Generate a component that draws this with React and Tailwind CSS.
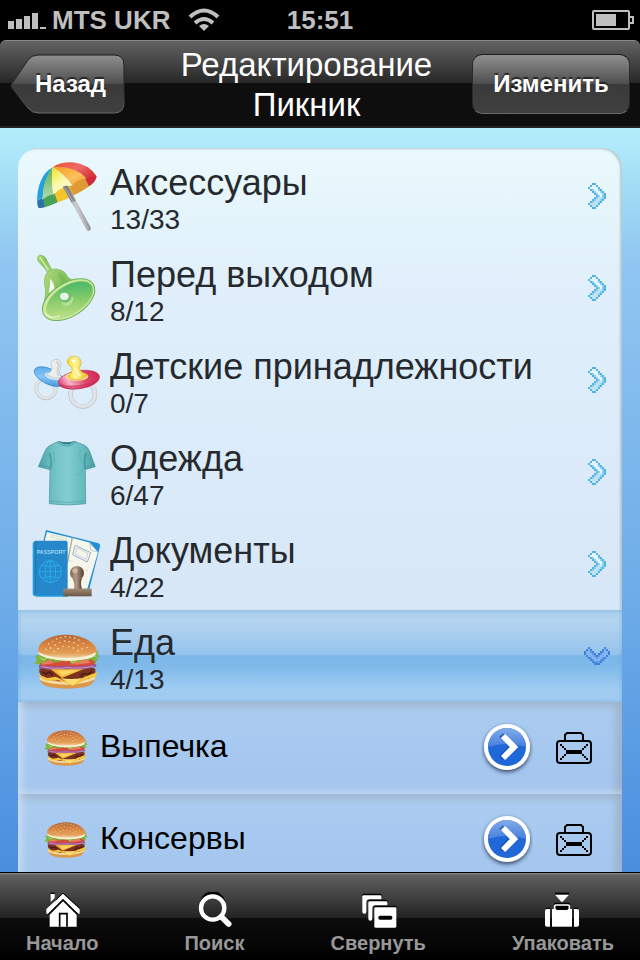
import React from "react";

const CHEVRON = [
  "..bb.....",
  ".bwwb....",
  "bwwwwb...",
  ".bmwwmb..",
  "..bmwwmb.",
  "...bmwwmb",
  "....bmwmb",
  "...bmllmb",
  "..bmllmb.",
  ".bmllmb..",
  "bllllb...",
  ".bllb....",
  "..bb.....",
];

function PixelChevron({ open }) {
  const colors = open
    ? { b: "#3b82d8", m: "#5b98e4", w: "#82b4f0", l: "#82b4f0" }
    : { b: "#52b2e2", m: "#8fcfee", w: "#e4f6fd", l: "#bfe3f5" };
  const cells = [];
  CHEVRON.forEach((line, y) =>
    [...line].forEach((c, x) => {
      if (c !== ".") {
        cells.push(
          <rect
            key={x + "-" + y}
            x={open ? y : x}
            y={open ? x : y}
            width="1"
            height="1"
            fill={colors[c]}
          />
        );
      }
    })
  );
  return open ? (
    <svg aria-hidden="true" viewBox="0 0 13 9" className="h-[18px] w-[26px] shrink-0" shapeRendering="crispEdges">{cells}</svg>
  ) : (
    <svg aria-hidden="true" viewBox="0 0 9 13" className="mr-1 h-[26px] w-[18px] shrink-0" shapeRendering="crispEdges">{cells}</svg>
  );
}

function Umbrella() {
  return (
    <svg aria-hidden="true" viewBox="42 30 198 216" className="h-[72px] w-[66px] shrink-0">
      <defs>
        <linearGradient id="umPole" x1="0" y1="0.6" x2="1" y2="0.4">
          <stop offset="0" stopColor="#7d7d82" />
          <stop offset="0.5" stopColor="#c9c9cd" />
          <stop offset="1" stopColor="#85858a" />
        </linearGradient>
        <linearGradient id="umRed" x1="0" y1="0" x2="1" y2="0.5">
          <stop offset="0" stopColor="#e8562a" />
          <stop offset="0.6" stopColor="#f0686a" />
          <stop offset="1" stopColor="#d83a3a" />
        </linearGradient>
        <linearGradient id="umYel" x1="0" y1="0" x2="0.6" y2="1">
          <stop offset="0" stopColor="#f0e21c" />
          <stop offset="0.55" stopColor="#fbf8a8" />
          <stop offset="1" stopColor="#faf6e0" />
        </linearGradient>
        <linearGradient id="umOr" x1="0" y1="0" x2="1" y2="1">
          <stop offset="0" stopColor="#f6a01c" />
          <stop offset="0.6" stopColor="#fbc060" />
          <stop offset="1" stopColor="#f08c28" />
        </linearGradient>
        <linearGradient id="umGr" x1="0.5" y1="0" x2="0.5" y2="1">
          <stop offset="0" stopColor="#5fb04c" />
          <stop offset="1" stopColor="#b5dcb4" />
        </linearGradient>
      </defs>
      <path d="M53 155Q95 110 130 104Q190 76 230 78Q226 98 196 116Q150 142 102 160Q78 172 57 174Q51 168 53 155Z" fill="#f0b52c" />
      <path d="M52 152Q62 144 78 146L74 172Q64 175 57 174Q51 168 52 152Z" fill="#2a6fb0" />
      <path d="M70 146Q90 130 103 127L113 157Q90 168 74 172Z" fill="#4aa354" />
      <path d="M103 127Q130 108 142 106L152 142Q130 152 113 157Z" fill="#f3c52e" />
      <path d="M150 108Q170 88 196 86L208 108Q180 128 160 136Z" fill="#e09a35" />
      <path d="M196 86Q216 72 230 79Q228 96 207 109Z" fill="#d0283c" />
      <path d="M98 52Q52 78 51 156Q62 140 68 150Q70 90 98 52Z" fill="#23a0e0" />
      <path d="M98 52Q68 90 67 150Q82 136 100 133Q94 86 98 52Z" fill="url(#umGr)" />
      <path d="M98 52Q92 96 100 134Q120 112 158 106Q130 74 98 52Z" fill="url(#umYel)" />
      <path d="M98 52Q134 74 158 106Q178 84 203 84Q168 44 98 52Z" fill="url(#umOr)" />
      <path d="M98 52Q118 36 158 37Q206 42 230 79Q214 76 200 86Q164 46 98 52Z" fill="url(#umRed)" />
      <path d="M129 110Q136 106 144 108L212 232Q214 241 206 243Q201 243 199 238Z" fill="url(#umPole)" />
      <path d="M129 110Q136 106 144 108L168 152L154 158Z" fill="#66666c" opacity="0.55" />
      <path d="M134 112L204 238" stroke="#dcdce0" strokeWidth="2" opacity="0.7" />
    </svg>
  );
}

function Bell() {
  return (
    <svg aria-hidden="true" viewBox="42 306 198 216" className="h-[72px] w-[66px] shrink-0">
      <defs>
        <linearGradient id="beBody" x1="0" y1="0" x2="1" y2="0.4">
          <stop offset="0" stopColor="#b5dc80" />
          <stop offset="0.5" stopColor="#84c25c" />
          <stop offset="1" stopColor="#9dd06c" />
        </linearGradient>
        <linearGradient id="beIn" x1="0" y1="1" x2="1" y2="0">
          <stop offset="0" stopColor="#cfe892" />
          <stop offset="0.5" stopColor="#86cb6a" />
          <stop offset="1" stopColor="#2fae68" />
        </linearGradient>
      </defs>
      <path d="M52 324Q54 314 65 316Q78 320 82 334L97 362L86 372Q74 352 61 341Q52 334 52 324Z" fill="url(#beBody)" stroke="#7ab95f" strokeWidth="2" />
      <path d="M60 322Q68 334 86 362" stroke="#d0eca0" strokeWidth="5" fill="none" />
      <path d="M76 378Q82 357 108 357Q134 360 141 378Q150 392 176 392L200 420L90 490L66 480Q82 430 74 404Q72 388 76 378Z" fill="url(#beBody)" stroke="#7ab95f" strokeWidth="2" />
      <path d="M90 386Q104 398 104 424L86 428Q92 404 90 386Z" fill="#fff" opacity="0.9" />
      <path d="M112 366Q128 368 132 384Q146 400 160 394L134 408Q118 396 112 366Z" fill="#64b052" opacity="0.4" />
      <ellipse cx="146" cy="449" rx="87" ry="50" transform="rotate(-32 146 449)" fill="#cdea9a" stroke="#69b058" strokeWidth="3" />
      <ellipse cx="149" cy="448" rx="78" ry="42" transform="rotate(-32 149 448)" fill="url(#beIn)" stroke="#a5d27a" strokeWidth="2" />
      <path d="M124 456Q150 440 160 440Q160 462 144 468Q128 470 124 456Z" fill="#b4e094" />
      <ellipse cx="136" cy="442" rx="18" ry="16" fill="#74be70" />
      <ellipse cx="133" cy="439" rx="13" ry="11" fill="#fff" opacity="0.85" />
      <path d="M74 488Q84 508 120 498" stroke="#f1fad8" strokeWidth="4" fill="none" opacity="0.7" />
    </svg>
  );
}

function Pacifiers() {
  return (
    <svg aria-hidden="true" viewBox="42 27 198 216" className="h-[72px] w-[66px] shrink-0 overflow-visible">
      <defs>
        <linearGradient id="paBlue" x1="0" y1="0" x2="1" y2="1">
          <stop offset="0" stopColor="#4aa3ea" />
          <stop offset="0.5" stopColor="#86c6f5" />
          <stop offset="1" stopColor="#2d86d6" />
        </linearGradient>
        <linearGradient id="paPink" x1="0" y1="0.6" x2="1" y2="0.4">
          <stop offset="0" stopColor="#e0386a" />
          <stop offset="0.25" stopColor="#f7b4c8" />
          <stop offset="0.6" stopColor="#e2486f" />
          <stop offset="1" stopColor="#cf2a56" />
        </linearGradient>
        <linearGradient id="paYel" x1="0" y1="0" x2="1" y2="0">
          <stop offset="0" stopColor="#f3da22" />
          <stop offset="0.4" stopColor="#fdf59a" />
          <stop offset="1" stopColor="#e8bf10" />
        </linearGradient>
      </defs>
      <ellipse cx="78" cy="160" rx="29" ry="30" fill="none" stroke="#b9bfc4" strokeWidth="11" />
      <ellipse cx="78" cy="159" rx="29" ry="30" fill="none" stroke="#dfe3e6" strokeWidth="9" />
      <ellipse cx="88" cy="125" rx="49" ry="23" transform="rotate(26 88 125)" fill="url(#paBlue)" stroke="#2e7fc6" strokeWidth="2" />
      <ellipse cx="100" cy="124" rx="26" ry="10" transform="rotate(14 100 124)" fill="#d4e6f2" />
      <path d="M80 118Q96 110 96 98Q86 78 106 73Q128 74 122 94Q114 108 124 128Q100 134 80 118Z" fill="#eceeee" stroke="#b4bcc2" strokeWidth="2" />
      <path d="M108 80Q120 84 114 100Q110 112 116 124" stroke="#cdd1d4" strokeWidth="6" fill="none" />
      <ellipse cx="188" cy="178" rx="37" ry="37" fill="none" stroke="#b9bfc4" strokeWidth="13" />
      <ellipse cx="188" cy="177" rx="37" ry="37" fill="none" stroke="#e1e4e6" strokeWidth="10" />
      <ellipse cx="177" cy="134" rx="62" ry="27" transform="rotate(-9 177 134)" fill="url(#paPink)" stroke="#c22b55" strokeWidth="2" />
      <path d="M116 146Q150 158 206 144Q232 136 238 122Q238 144 206 156Q150 172 118 152Z" fill="#c92652" opacity="0.6" />
      <ellipse cx="171" cy="124" rx="34" ry="13" fill="#f9e7a0" />
      <path d="M142 124Q158 116 156 98Q134 84 146 70Q160 58 176 68Q190 80 178 98Q182 114 202 120Q192 134 170 134Q150 134 142 124Z" fill="url(#paYel)" stroke="#dcae18" strokeWidth="2" />
      <path d="M152 76Q160 70 166 76L160 84Z" fill="#fff" opacity="0.9" />
      <path d="M166 100Q172 116 182 122" stroke="#fff9c8" strokeWidth="5" fill="none" />
    </svg>
  );
}

function Shirt() {
  return (
    <svg aria-hidden="true" viewBox="42 303 198 216" className="h-[72px] w-[66px] shrink-0">
      <defs>
        <linearGradient id="shBody" x1="0" y1="0" x2="1" y2="0">
          <stop offset="0" stopColor="#4aa3a6" />
          <stop offset="0.25" stopColor="#6fc0c4" />
          <stop offset="0.5" stopColor="#82cdd2" />
          <stop offset="0.8" stopColor="#66babe" />
          <stop offset="1" stopColor="#459c9f" />
        </linearGradient>
      </defs>
      <path d="M116 319Q140 330 164 319L194 331Q204 336 210 352L226 395L196 404L197 506Q142 514 88 506L90 404L55 395L74 350Q80 336 90 331Z" fill="url(#shBody)" stroke="#43979b" strokeWidth="2" strokeLinejoin="round" />
      <path d="M116 319Q140 338 164 319Q140 325 116 319Z" fill="#2f7f84" />
      <path d="M113 321Q140 346 167 321" fill="none" stroke="#4c9da2" strokeWidth="3" />
      <path d="M91 402Q98 380 88 354M196 402Q190 380 198 354" fill="none" stroke="#2f8488" strokeWidth="5" opacity="0.6" />
      <path d="M91 400Q110 380 100 350M195 390Q172 374 182 346M168 420Q184 414 194 396" fill="none" stroke="#4fa9ad" strokeWidth="4" opacity="0.4" />
      <path d="M89 498Q142 507 197 498" fill="none" stroke="#4ba5a9" strokeWidth="2" />
      <path d="M58 389L90 397M224 389L197 397" stroke="#418f93" strokeWidth="2" />
    </svg>
  );
}

function Passport() {
  return (
    <svg aria-hidden="true" viewBox="42 24 198 216" className="h-[72px] w-[66px] shrink-0 overflow-visible">
      <defs>
        <linearGradient id="psKnob" x1="0" y1="0" x2="1" y2="0">
          <stop offset="0" stopColor="#7a6251" />
          <stop offset="0.4" stopColor="#b59c88" />
          <stop offset="1" stopColor="#4f3b30" />
        </linearGradient>
        <linearGradient id="psBase" x1="0" y1="0" x2="0" y2="1">
          <stop offset="0" stopColor="#a08a76" />
          <stop offset="1" stopColor="#6b5546" />
        </linearGradient>
      </defs>
      <path d="M78 30L158 50L236 70L241 76L208 208L130 200L66 80Z" fill="#2390d6" />
      <path d="M81 36L156 54L150 100L72 70Z" fill="#f4f5e8" />
      <path d="M158 54L210 68L214 88L234 96L202 206L132 206L140 100Z" fill="#f6f6ea" />
      <path d="M157 52L142 130" stroke="#a9ad9e" strokeWidth="4" />
      <path d="M210 70L234 96L212 90Z" fill="#fff" stroke="#9db5c2" strokeWidth="2" />
      <path d="M166 76L212 98L202 126L158 104Z" fill="none" stroke="#9aaed0" strokeWidth="3" />
      <path d="M172 84L204 100L198 118L166 102Z" fill="none" stroke="#b2c0da" strokeWidth="2" />
      <path d="M92 44L142 56M90 50L140 62M146 120L158 124M196 150L204 152" stroke="#b8c6b8" strokeWidth="2" strokeDasharray="6 3" />
      <path d="M48 62H136Q143 62 143 68V228H48Q40 228 40 220V70Q40 62 48 62Z" fill="#2687cb" />
      <path d="M40 68V222Q42 228 50 228H143" fill="none" stroke="#1d9fe0" strokeWidth="4" />
      <path d="M47 66V220" stroke="#1f76b6" strokeWidth="3" />
      <text x="50" y="101" fontSize="16" fontWeight="700" fill="#9ad8f5" className="font-['Liberation_Sans',Arial,sans-serif]">PASSPORT</text>
      <g fill="none" stroke="#27aeea" strokeWidth="3">
        <circle cx="91" cy="155" r="33" />
        <ellipse cx="91" cy="155" rx="16" ry="33" />
        <path d="M91 122V188M58 155H124M64 136Q91 144 118 136M64 174Q91 166 118 174" />
      </g>
      <path d="M158 176Q166 190 162 208H186Q180 190 186 174Z" fill="url(#psKnob)" />
      <circle cx="171" cy="159" r="21" fill="url(#psKnob)" />
      <ellipse cx="165" cy="152" rx="8" ry="7" fill="#d6c6b8" opacity="0.75" />
      <rect x="130" y="206" width="85" height="23" fill="url(#psBase)" />
    </svg>
  );
}

function Burger({ small }) {
  const id = React.useId();
  const seeds = [
    [86, 372], [98, 364], [110, 357], [122, 353], [136, 350], [150, 352], [164, 354], [176, 360], [190, 370], [202, 382],
    [92, 384], [106, 375], [120, 367], [134, 363], [148, 365], [162, 368], [174, 376], [186, 385], [78, 388], [114, 386],
    [130, 379], [146, 380], [160, 384], [102, 394], [174, 392],
  ];
  return (
    <svg
      aria-hidden="true"
      viewBox={small ? "42 338 198 174" : "42 300 198 216"}
      className={small ? "h-[38px] w-[44px] shrink-0" : "h-[72px] w-[66px] shrink-0"}
    >
      <defs>
        <linearGradient id={id} x1="0" y1="0" x2="0" y2="1">
          <stop offset="0" stopColor="#b5683a" />
          <stop offset="0.4" stopColor="#d98440" />
          <stop offset="0.72" stopColor="#e3a058" />
          <stop offset="1" stopColor="#f7ecca" />
        </linearGradient>
      </defs>
      <path d="M58 470Q60 496 92 502Q140 510 192 502Q226 494 226 468Z" fill="#dd9748" />
      <path d="M58 470Q90 486 142 486Q200 486 226 466L225 478Q190 494 142 494Q88 494 60 480Z" fill="#f4dcaa" />
      <path d="M58 446Q90 436 142 444Q200 436 226 446Q230 470 206 476Q142 490 80 476Q54 466 58 446Z" fill="#7c3220" />
      <path d="M66 456L78 462L88 456L98 466M180 470L192 460L204 464L216 454" stroke="#4f1c12" strokeWidth="5" fill="none" />
      <path d="M54 414Q100 404 142 412Q196 404 232 416L222 440L60 438Z" fill="#7eae36" />
      <path d="M56 420L86 414L106 428L140 420L176 428L206 416L226 424L218 438Q140 452 62 436Z" fill="#d84a38" />
      <path d="M62 424L94 420L102 430L66 434ZM156 424L200 418L212 428L164 434Z" fill="#ee7a62" />
      <path d="M58 434Q100 442 140 437Q190 442 226 431L230 439Q190 454 140 450Q96 454 56 443Z" fill="#a0508e" />
      <path d="M64 440Q106 448 140 443Q190 447 220 438" stroke="#e3c3dc" strokeWidth="2" fill="none" />
      <path d="M92 448L190 448L126 474Z" fill="#f3b72e" />
      <path d="M112 452L176 450L126 468Z" fill="#f9d766" />
      <path d="M50 462L82 474L108 470L156 494L194 470L234 456L226 472L204 476L158 497L116 480L78 482Z" fill="#f5c63c" />
      <path d="M120 474L158 496L188 474Q152 480 120 474Z" fill="#fbdc70" />
      <path d="M50 404Q44 414 52 420L42 430L58 434L64 426L74 430L82 418L94 424L104 414L116 424L128 418L138 426L146 416L156 436L166 420L178 428L190 414L204 422L214 416L226 426L234 418L226 414L240 410L232 402L236 392Q142 430 50 404Z" fill="#7db43c" />
      <path d="M58 412L70 420L84 412M106 418L122 414M148 420L158 428L172 416M196 414L216 408L230 408" stroke="#bfe07c" strokeWidth="3" fill="none" />
      <path d="M54 394Q52 372 82 356Q110 343 140 344Q176 344 200 358Q232 376 230 398Q220 416 184 418Q142 426 96 416Q58 410 54 394Z" fill={"url(#" + id + ")"} />
      <path d="M54 396Q90 414 142 414Q198 414 230 396Q226 412 200 417Q142 428 84 415Q56 408 54 396Z" fill="#f8f0d4" />
      <g fill="#f9e6bd" opacity="0.85">
        {seeds.map(([x, y]) => (
          <ellipse key={x + "-" + y} cx={x} cy={y} rx="3" ry="2" />
        ))}
      </g>
    </svg>
  );
}

function GoIcon() {
  return (
    <svg aria-hidden="true" viewBox="0 0 52 56" className="h-14 w-[52px]">
      <defs>
        <linearGradient id="goTop" x1="0" y1="0" x2="0" y2="1">
          <stop offset="0" stopColor="#82abe9" />
          <stop offset="1" stopColor="#4580de" />
        </linearGradient>
        <filter id="goShadow" x="-20%" y="-20%" width="140%" height="150%">
          <feDropShadow dx="0" dy="2" stdDeviation="2" floodColor="#1c2c48" floodOpacity="0.85" />
        </filter>
      </defs>
      <circle cx="26" cy="27" r="23" fill="#fff" filter="url(#goShadow)" />
      <circle cx="26" cy="27" r="19" fill="#2068d8" />
      <path d="M7 27A19 19 0 0 1 45 27Q26 21 7 27Z" fill="url(#goTop)" />
      <path d="M20 15L31 26L20 38" fill="none" stroke="#0d3fae" strokeWidth="5" opacity="0.6" />
      <path d="M22 16L33 27L22 38" fill="none" stroke="#fff" strokeWidth="6" />
    </svg>
  );
}

function CaseIcon() {
  const dots = [
    [4, 12], [6, 14], [8, 16], [8, 22], [6, 24], [4, 26],
    [30, 12], [28, 14], [26, 16], [26, 22], [28, 24], [30, 26],
  ];
  return (
    <svg aria-hidden="true" viewBox="0 0 36 32" className="h-8 w-9">
      <g fill="none" stroke="#000" strokeWidth="2">
        <path d="M9 8V3L11 1H25L27 3V8" />
        <rect x="1" y="9" width="34" height="22" rx="3" />
      </g>
      {dots.map(([x, y]) => (
        <rect key={x + "-" + y} x={x} y={y} width="2" height="2" />
      ))}
      <rect x="10" y="18" width="16" height="4" />
    </svg>
  );
}

const categories = [
  { title: "Аксессуары", count: "13/33", Icon: Umbrella },
  { title: "Перед выходом", count: "8/12", Icon: Bell },
  { title: "Детские принадлежности", count: "0/7", Icon: Pacifiers },
  { title: "Одежда", count: "6/47", Icon: Shirt },
  { title: "Документы", count: "4/22", Icon: Passport },
  { title: "Еда", count: "4/13", Icon: Burger, open: true, items: ["Выпечка", "Консервы"] },
];

function Category({ title, count, Icon, open, items }) {
  return (
    <li>
      <button
        type="button"
        aria-expanded={!!open}
        className={
          "flex h-23 w-full items-center gap-[10px] pl-4 pr-3 text-left " +
          (open
            ? "bg-[linear-gradient(to_bottom,#a9cff0_0%,#b4d4f0_12%,#96c4ec_48%,#7cb7e9_50%,#80baea_62%,#a2cdf2_88%,#a0ccf0_100%)] shadow-[inset_0_0_4px_rgba(90,150,200,0.5)]"
            : "")
        }
      >
        <Icon />
        <span className="min-w-0 flex-1 pt-[6px] text-[#262a2e]">
          <span className="block truncate text-4xl leading-[42px]">{title}</span>
          <span className="block text-[28px] leading-8">{count}</span>
        </span>
        <PixelChevron open={open} />
      </button>
      {items && (
        <ul>
          {items.map((name) => (
            <li
              key={name}
              className="flex h-23 items-center bg-[linear-gradient(to_bottom,#abcdf1,#a3c5ee)] pl-[26px] pr-[30px] shadow-[inset_8px_-6px_8px_-4px_rgba(225,235,245,0.6),inset_-8px_6px_8px_-2px_rgba(150,160,175,0.6)]"
            >
              <Burger small />
              <span className="min-w-0 flex-1 truncate pb-1 pl-3 text-[32px] leading-10 text-black">{name}</span>
              <button type="button" aria-label={"Открыть: " + name} className="mr-[23px]"><GoIcon /></button>
              <button type="button" aria-label={"Упаковать: " + name}><CaseIcon /></button>
            </li>
          ))}
        </ul>
      )}
    </li>
  );
}

const tabs = [
  {
    label: "Начало",
    icon: (
      <svg aria-hidden="true" viewBox="133 82 108 108" className="size-9 overflow-visible">
        <path d="M153 88H165V100L153 112Z" fill="#fff" />
        <rect x="153" y="84" width="12" height="4" fill="#000" />
        <path d="M190 87L240 133V147H235L190 103L146 147H140V133Z" fill="#fff" />
        <path d="M190 110L231 150V186H150V150Z" fill="#fff" />
        <path d="M168 107L190 85L240 131" fill="none" stroke="#000" strokeWidth="3" />
        <path d="M147 149L190 106L234 149" fill="none" stroke="#000" strokeWidth="4" />
        <path d="M180 186V147H202V186" fill="none" stroke="#000" strokeWidth="5" />
      </svg>
    ),
  },
  {
    label: "Поиск",
    icon: (
      <svg aria-hidden="true" viewBox="592 82 108 108" className="size-9" fill="none">
        <path d="M606 110A34 34 0 0 1 672 110" stroke="#000" strokeWidth="9" />
        <circle cx="639" cy="130" r="35" stroke="#fff" strokeWidth="13" />
        <path d="M665 156L687 178" stroke="#fff" strokeWidth="17" strokeLinecap="round" />
      </svg>
    ),
  },
  {
    label: "Свернуть",
    icon: (
      <svg aria-hidden="true" viewBox="122 82 108 108" className="size-9 overflow-visible">
        <path d="M129 90Q129 87 133 87H182Q186 87 186 91V95H129Z" fill="#000" />
        <path d="M129 95Q129 92 133 92H182Q186 92 186 96V104H150Q141 104 141 113V141Q141 147 135 147Q129 147 129 141Z" fill="#fff" />
        <path d="M147 112V108Q147 105 151 105H200Q204 105 204 109V113Z" fill="#000" />
        <path d="M147 114Q147 110 151 110H200Q204 110 204 114V122H168Q159 122 159 131V162Q159 168 153 168Q147 168 147 162Z" fill="#fff" />
        <path d="M165 130V126Q165 123 169 123H227Q231 123 231 127V132Z" fill="#000" />
        <rect x="165" y="128" width="66" height="61" rx="4" fill="#fff" />
        <rect x="177" y="153" width="42" height="12" rx="5" fill="#000" />
      </svg>
    ),
  },
  {
    label: "Упаковать",
    icon: (
      <svg aria-hidden="true" viewBox="675 82 108 108" className="size-9">
        <rect x="705" y="84" width="42" height="6" fill="#000" />
        <path d="M705 90H747L728 111H724Z" fill="#fff" />
        <path d="M702 134V118Q702 114 706 114H746Q750 114 750 118V134Z" fill="#000" />
        <path d="M704 134V124Q704 121 708 121H744Q748 121 748 124V134" fill="none" stroke="#fff" strokeWidth="5" />
        <rect x="696" y="133" width="60" height="53" fill="#fff" />
        <rect x="709" y="132" width="34" height="4" fill="#000" />
        <path d="M690 133V186H681Q675 186 675 180V139Q675 133 681 133Z" fill="#fff" />
        <path d="M762 133V186H771Q777 186 777 180V139Q777 133 771 133Z" fill="#fff" />
        <path d="M678 131H690M762 131H774" stroke="#000" strokeWidth="4" />
      </svg>
    ),
  },
];

function StatusBar() {
  return (
    <div className="flex h-10 shrink-0 items-center bg-black px-[6px] text-[26px] font-bold leading-10 text-[#bfbfbf]">
      <div className="flex flex-1 items-center">
        <svg aria-hidden="true" viewBox="0 0 40 18" className="ml-[2px] h-[18px] w-10 shrink-0 overflow-visible" fill="#bfbfbf" shapeRendering="crispEdges">
          <rect x="0" y="10" width="6" height="8" />
          <rect x="8" y="8" width="6" height="10" />
          <rect x="16" y="5" width="6" height="13" />
          <rect x="24" y="2" width="6" height="16" />
          <rect x="32" y="16" width="6" height="2" />
        </svg>
        <span className="pl-1">MTS UKR</span>
        <svg aria-hidden="true" viewBox="0 0 32 24" className="ml-[18px] h-6 w-8" fill="none" stroke="#bfbfbf">
          <path d="M2 9Q16 -4 30 9" strokeWidth="4" />
          <path d="M7 15Q16 7 25 15" strokeWidth="4" />
          <path d="M11 18Q16 14 21 18L16 23Z" fill="#bfbfbf" stroke="none" />
        </svg>
      </div>
      <span>15:51</span>
      <div className="flex flex-1 justify-end">
        <svg aria-hidden="true" viewBox="0 0 42 20" className="h-5 w-[42px]" fill="#bfbfbf">
          <rect x="1" y="1" width="36" height="18" rx="1" fill="none" stroke="#bfbfbf" strokeWidth="2" />
          <rect x="4" y="4" width="20" height="12" />
          <path d="M38 7H41V13H38" fill="none" stroke="#bfbfbf" strokeWidth="2" />
        </svg>
      </div>
    </div>
  );
}

export default function App() {
  return (
    <div className="flex h-screen flex-col overflow-hidden bg-black font-['Liberation_Sans',Arial,sans-serif]">
      <StatusBar />
      <header className="flex h-22 shrink-0 items-center rounded-t-md border-t border-b-2 border-t-[#8a8a8a] border-b-[#252222] bg-[linear-gradient(to_bottom,#636363_0%,#262626_50%,#0e0e0e_50%,#0e0e0e_100%)] px-[10px] text-white">
        <button type="button" className="relative h-15 w-[115px] shrink-0 pl-[6px] text-2xl font-bold [text-shadow:0_-2px_1px_rgba(0,0,0,0.6)]">
          <svg aria-hidden="true" viewBox="0 0 115 60" className="absolute inset-0 h-full w-full">
            <defs>
              <linearGradient id="backFill" x1="0" y1="0" x2="0" y2="1">
                <stop offset="0" stopColor="#909090" />
                <stop offset="0.5" stopColor="#4e4e4e" />
                <stop offset="0.5" stopColor="#3a3a3a" />
                <stop offset="1" stopColor="#404040" />
              </linearGradient>
              <linearGradient id="backEdge" x1="0" y1="0" x2="0" y2="1">
                <stop offset="0" stopColor="#1c1c1c" />
                <stop offset="0.6" stopColor="#2a2a2a" />
                <stop offset="1" stopColor="#6a6a6a" />
              </linearGradient>
            </defs>
            <path d="M28 1H104Q114 1 114 11V49Q114 59 104 59H28Q22 59 18 54L1 33V31L18 6Q22 1 28 1Z" fill="url(#backFill)" stroke="url(#backEdge)" />
          </svg>
          <span className="relative">Назад</span>
        </button>
        <h1 className="flex-1 pl-4 pt-[2px] text-center text-[33px] leading-10">
          Редактирование
          <br />
          Пикник
        </h1>
        <button type="button" className="h-15 w-[158px] shrink-0 rounded-[10px] border border-b-[#6a6a6a] border-l-[#2a2a2a] border-r-[#2a2a2a] border-t-[#1c1c1c] bg-[linear-gradient(to_bottom,#909090_0%,#4e4e4e_50%,#3a3a3a_50%,#404040_100%)] text-2xl font-bold [text-shadow:0_-2px_1px_rgba(0,0,0,0.6)]">
          Изменить
        </button>
      </header>
      <main className="min-h-0 flex-1 overflow-hidden bg-[linear-gradient(to_bottom,#b4eefc_0%,#a2dcf4_8%,#90c6f1_18%,#6cabe8_65%,#4a8edf_100%)] px-[18px] pt-5">
        <ul className="overflow-hidden rounded-t-[20px] bg-[linear-gradient(to_bottom,#e9f9fc_0px,#e0effb_140px,#d7e7f7_462px)] pt-[2px] shadow-[inset_-2px_1px_2px_rgba(150,175,185,0.6)]">
          {categories.map((c) => (
            <Category key={c.title} {...c} />
          ))}
        </ul>
      </main>
      <nav className="flex h-22 shrink-0 items-start justify-between border-t border-black bg-[linear-gradient(to_bottom,#808080_0px,#808080_1px,#606060_2px,#222222_45px,#0d0d0d_45px,#000000_100%)] px-[26px] pt-[19px]">
        {tabs.map((t) => (
          <button key={t.label} type="button" className="flex flex-col items-center gap-[3px] text-xl font-bold leading-6 text-[#989898]">
            {t.icon}
            {t.label}
          </button>
        ))}
      </nav>
    </div>
  );
}
